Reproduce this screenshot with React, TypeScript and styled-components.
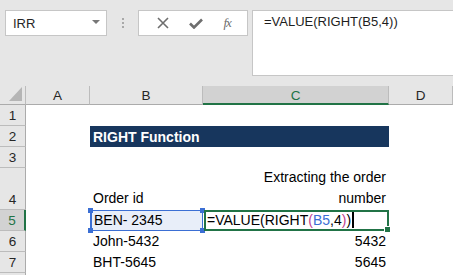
import React from "react";
import styled, { createGlobalStyle, css } from "styled-components";

const GlobalStyle = createGlobalStyle`
  html, body {
    margin: 0;
    padding: 0;
    background: #ffffff;
    font-family: "Liberation Sans", Arial, sans-serif;
    overflow: hidden;
  }
`;

const columns = ["A", "B", "C", "D"];

const App: React.FC = () => {
  return (
    <Window>
      <GlobalStyle />
      <FormulaBar>
        <NameBox>
          IRR
          <Caret />
        </NameBox>
        <Grip>
          <i />
          <i />
          <i />
        </Grip>
        <IconBox>
          <svg width="12" height="12" viewBox="0 0 12 12">
            <path d="M1 1 L11 11 M11 1 L1 11" stroke="#6e6e6e" strokeWidth="1.6" fill="none" />
          </svg>
          <svg width="14" height="11" viewBox="0 0 14 11">
            <path d="M1 5.5 L5 9.5 L13 1.5" stroke="#6e6e6e" strokeWidth="2.6" fill="none" />
          </svg>
          <Fx>fx</Fx>
        </IconBox>
        <FormulaInput>=VALUE(RIGHT(B5,4))</FormulaInput>
      </FormulaBar>

      <Sheet>
        <Corner>
          <svg width="13" height="14" viewBox="0 0 13 14">
            <polygon points="0,14 13,14 13,0" fill="#b5b5b5" />
          </svg>
        </Corner>
        {columns.map((c) => (
          <ColHeader key={c} selected={c === "C"}>
            {c}
          </ColHeader>
        ))}
        <ColHeader />

        <RowHeader>1</RowHeader>
        <Cell />
        <Cell />
        <Cell />
        <Cell />
        <Cell />

        <RowHeader>2</RowHeader>
        <Cell />
        <TitleCell>RIGHT Function</TitleCell>
        <Cell />
        <Cell />

        <RowHeader>3</RowHeader>
        <Cell />
        <Cell />
        <Cell />
        <Cell />
        <Cell />

        <RowHeader tall>4</RowHeader>
        <Cell />
        <Cell bottom>Order id</Cell>
        <Cell bottom right wrap>
          Extracting the order number
        </Cell>
        <Cell />
        <Cell />

        <RowHeader selected>5</RowHeader>
        <Cell />
        <RefCell>
          BEN- 2345
          <Handle pos="tl" />
          <Handle pos="tr" />
          <Handle pos="bl" />
          <Handle pos="br" />
        </RefCell>
        <ActiveCell>
          =VALUE(RIGHT<Paren>(</Paren>
          <Ref>B5</Ref>,4<Paren>)</Paren>)<TextCursor />
          <FillHandle />
        </ActiveCell>
        <Cell />
        <Cell />

        <RowHeader>6</RowHeader>
        <Cell />
        <Cell>John-5432</Cell>
        <Cell right>5432</Cell>
        <Cell />
        <Cell />

        <RowHeader>7</RowHeader>
        <Cell />
        <Cell>BHT-5645</Cell>
        <Cell right>5645</Cell>
        <Cell />
        <Cell />

        <RowHeader />
        <Cell />
        <Cell />
        <Cell />
        <Cell />
        <Cell />
      </Sheet>
    </Window>
  );
};

const Window = styled.div`
  width: 453px;
  height: 275px;
  overflow: hidden;
  background: #ffffff;
`;

const FormulaBar = styled.div`
  height: 86px;
  background: #e6e6e6;
  display: flex;
  align-items: flex-start;
  padding: 10px 0 0 5px;
  box-sizing: border-box;
`;

const boxBase = css`
  background: #ffffff;
  border: 1px solid #c6c6c6;
  box-sizing: border-box;
`;

const NameBox = styled.div`
  ${boxBase};
  width: 102px;
  height: 26px;
  display: flex;
  align-items: center;
  justify-content: space-between;
  padding: 0 6px 0 7px;
  font-size: 13px;
  color: #262626;
`;

const Caret = styled.span`
  width: 0;
  height: 0;
  border-left: 4px solid transparent;
  border-right: 4px solid transparent;
  border-top: 4px solid #777777;
  margin-bottom: 3px;
`;

const Grip = styled.div`
  width: 31px;
  height: 26px;
  display: flex;
  flex-direction: column;
  align-items: center;
  justify-content: center;
  gap: 2px;
  & > i {
    width: 2px;
    height: 2px;
    background: #a8a8a8;
  }
`;

const IconBox = styled.div`
  ${boxBase};
  width: 110px;
  height: 26px;
  display: flex;
  align-items: center;
  justify-content: space-around;
  padding: 0 6px 0 8px;
`;

const Fx = styled.span`
  font-family: "Liberation Serif", "Times New Roman", serif;
  font-style: italic;
  font-size: 13px;
  color: #6e6e6e;
  letter-spacing: -1px;
`;

const FormulaInput = styled.div`
  ${boxBase};
  flex: 1;
  height: 66px;
  margin-left: 4px;
  margin-right: -4px;
  padding: 3px 0 0 11px;
  font-size: 13px;
  color: #1e1e1e;
`;

const Sheet = styled.div`
  display: grid;
  grid-template-columns: 26px 64px 113px 186px 64px 1fr;
  grid-template-rows: 19px 21px 21px 21px 42px 21px 21px 21px 21px;
  font-size: 14px;
  color: #000000;
`;

const headerBase = css`
  background: #e6e6e6;
  box-sizing: border-box;
  display: flex;
  justify-content: center;
  font-size: 13.5px;
  color: #262626;
`;

const Corner = styled.div`
  ${headerBase};
  border-right: 1px solid #bcbcbc;
  border-bottom: 1px solid #ababab;
  align-items: flex-end;
  justify-content: flex-end;
  padding: 0 3px 3px 0;
`;

const ColHeader = styled.div<{ selected?: boolean }>`
  ${headerBase};
  align-items: center;
  border-right: 1px solid #bcbcbc;
  border-bottom: ${({ selected }) => (selected ? "2px solid #217346" : "1px solid #ababab")};
  background: ${({ selected }) => (selected ? "#d2d2d2" : "#e6e6e6")};
  color: ${({ selected }) => (selected ? "#217346" : "#262626")};
  padding-top: 1px;
`;

const RowHeader = styled.div<{ selected?: boolean; tall?: boolean }>`
  ${headerBase};
  align-items: ${({ tall }) => (tall ? "flex-end" : "center")};
  padding-bottom: ${({ tall }) => (tall ? "2px" : "0")};
  border-bottom: 1px solid #bcbcbc;
  border-right: ${({ selected }) => (selected ? "2px solid #217346" : "1px solid #ababab")};
  background: ${({ selected }) => (selected ? "#d2d2d2" : "#e6e6e6")};
  color: ${({ selected }) => (selected ? "#217346" : "#262626")};
`;

const Cell = styled.div<{ right?: boolean; bottom?: boolean; wrap?: boolean }>`
  box-sizing: border-box;
  display: flex;
  align-items: ${({ bottom }) => (bottom ? "flex-end" : "center")};
  justify-content: ${({ right }) => (right ? "flex-end" : "flex-start")};
  text-align: ${({ right }) => (right ? "right" : "left")};
  padding: 0 3px 1px 3px;
  line-height: 21px;
  white-space: ${({ wrap }) => (wrap ? "normal" : "nowrap")};
  ${({ wrap }) =>
    wrap &&
    css`
      padding-left: 50px;
    `}
`;

const TitleCell = styled.div`
  grid-column: span 2;
  background: #17365d;
  color: #ffffff;
  font-weight: bold;
  font-size: 14px;
  display: flex;
  align-items: center;
  padding: 0 3px;
`;

const RefCell = styled.div`
  position: relative;
  box-sizing: border-box;
  background: #e8eef9;
  border: 1px solid #3b6fd4;
  border-left-width: 2px;
  display: flex;
  align-items: center;
  padding: 0 2px 1px;
  white-space: nowrap;
`;

const handlePos = {
  tl: css`
    top: -3px;
    left: -4px;
  `,
  tr: css`
    top: -3px;
    right: -3px;
  `,
  bl: css`
    bottom: -3px;
    left: -4px;
  `,
  br: css`
    bottom: -3px;
    right: -3px;
  `,
};

const Handle = styled.span<{ pos: keyof typeof handlePos }>`
  position: absolute;
  width: 5px;
  height: 5px;
  background: #3b6fd4;
  ${({ pos }) => handlePos[pos]};
`;

const ActiveCell = styled.div`
  position: relative;
  box-sizing: border-box;
  border: 2px solid #217346;
  display: flex;
  align-items: center;
  padding: 0 1px 1px;
  white-space: nowrap;
  margin-left: 1px;
`;

const Paren = styled.span`
  color: #c0408f;
`;

const Ref = styled.span`
  color: #3b6fd4;
`;

const TextCursor = styled.span`
  width: 2px;
  height: 16px;
  background: #000000;
  margin-left: 1px;
`;

const FillHandle = styled.span`
  position: absolute;
  right: -4px;
  bottom: -4px;
  width: 5px;
  height: 5px;
  background: #217346;
  border: 1px solid #ffffff;
`;

export default App;
